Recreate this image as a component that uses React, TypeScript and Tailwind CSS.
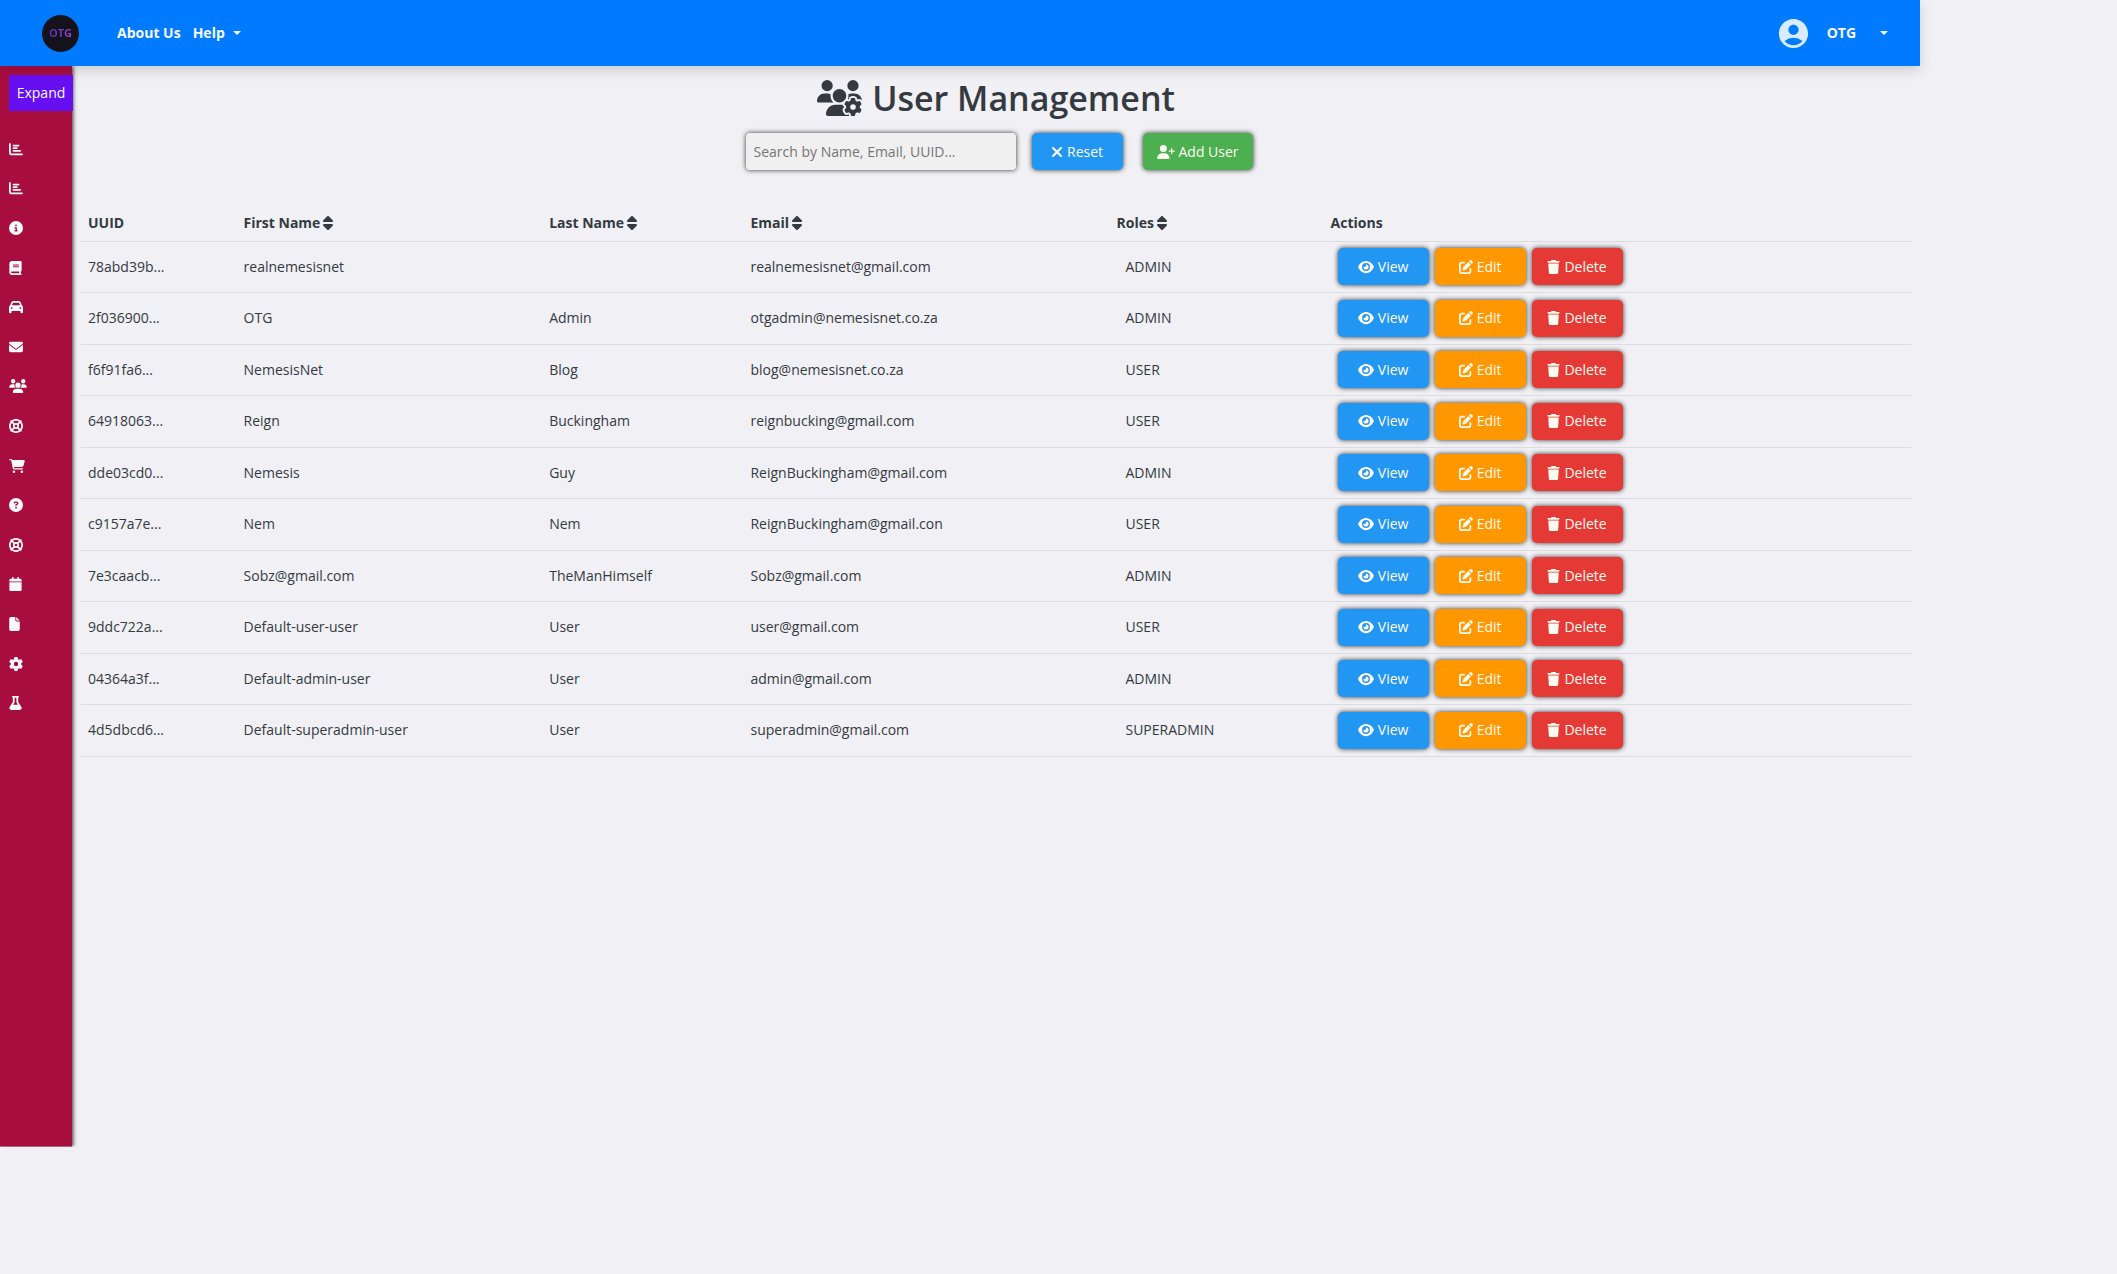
import {
  FaBook,
  FaCalendar,
  FaCar,
  FaCartShopping,
  FaChartBar,
  FaCircleInfo,
  FaCircleQuestion,
  FaEnvelope,
  FaEye,
  FaFile,
  FaFlask,
  FaGear,
  FaLifeRing,
  FaPenToSquare,
  FaSort,
  FaTrash,
  FaUserPlus,
  FaUsers,
  FaUsersGear,
  FaXmark,
} from 'react-icons/fa6';
import { MdAccountCircle } from 'react-icons/md';

const menu = [
  { name: 'Dashboard', icon: FaChartBar, width: 'w-[14px]' },
  { name: 'Reports', icon: FaChartBar, width: 'w-[14px]' },
  { name: 'Information', icon: FaCircleInfo, width: 'w-[14px]' },
  { name: 'Bookings', icon: FaBook, width: 'w-[13px]' },
  { name: 'Vehicles', icon: FaCar, width: 'w-[14px]' },
  { name: 'Messages', icon: FaEnvelope, width: 'w-[14px]' },
  { name: 'Users', icon: FaUsers, width: 'w-[18px]' },
  { name: 'Support', icon: FaLifeRing, width: 'w-[14px]' },
  { name: 'Shop', icon: FaCartShopping, width: 'w-4' },
  { name: 'FAQ', icon: FaCircleQuestion, width: 'w-[14px]' },
  { name: 'Help desk', icon: FaLifeRing, width: 'w-[14px]' },
  { name: 'Calendar', icon: FaCalendar, width: 'w-[13px]' },
  { name: 'Files', icon: FaFile, width: 'w-[11px]' },
  { name: 'Settings', icon: FaGear, width: 'w-[14px]' },
  { name: 'Testing', icon: FaFlask, width: 'w-[13px]' },
];

const columns = [
  { label: 'UUID', width: 'w-[8.5%]', sortable: false },
  { label: 'First Name', width: 'w-[16.7%]', sortable: true },
  { label: 'Last Name', width: 'w-[11%]', sortable: true },
  { label: 'Email', width: 'w-[20%]', sortable: true },
  { label: 'Roles', width: 'w-[11.7%]', sortable: true },
  { label: 'Actions', width: 'w-[32.1%]', sortable: false },
];

const users = [
  { uuid: '78abd39b...', first: 'realnemesisnet', last: '', email: 'realnemesisnet@gmail.com', role: 'ADMIN' },
  { uuid: '2f036900...', first: 'OTG', last: 'Admin', email: 'otgadmin@nemesisnet.co.za', role: 'ADMIN' },
  { uuid: 'f6f91fa6...', first: 'NemesisNet', last: 'Blog', email: 'blog@nemesisnet.co.za', role: 'USER' },
  { uuid: '64918063...', first: 'Reign', last: 'Buckingham', email: 'reignbucking@gmail.com', role: 'USER' },
  { uuid: 'dde03cd0...', first: 'Nemesis', last: 'Guy', email: 'ReignBuckingham@gmail.com', role: 'ADMIN' },
  { uuid: 'c9157a7e...', first: 'Nem', last: 'Nem', email: 'ReignBuckingham@gmail.con', role: 'USER' },
  { uuid: '7e3caacb...', first: 'Sobz@gmail.com', last: 'TheManHimself', email: 'Sobz@gmail.com', role: 'ADMIN' },
  { uuid: '9ddc722a...', first: 'Default-user-user', last: 'User', email: 'user@gmail.com', role: 'USER' },
  { uuid: '04364a3f...', first: 'Default-admin-user', last: 'User', email: 'admin@gmail.com', role: 'ADMIN' },
  { uuid: '4d5dbcd6...', first: 'Default-superadmin-user', last: 'User', email: 'superadmin@gmail.com', role: 'SUPERADMIN' },
];

const button = 'flex items-center justify-center gap-1 shrink-0 h-[37px] rounded-[5px] text-[#fffaf0] shadow-[0_0_5px_#333]';

const Caret = () => (
  <span className="w-0 h-0 border-x-4 border-x-transparent border-t-4 border-t-current" />
);

const Navbar = () => {
  return (
    <nav className="relative z-10 flex items-center h-[66px] pl-[42px] pr-8 bg-[#007bff] text-[#f8f9fa] font-bold shadow-[0_4px_12px_rgba(0,0,0,0.15)]">
      <a href="#" className="flex items-center justify-center size-[37px] rounded-full bg-[#14121a] text-[11px]">
        <span className="bg-linear-to-r from-[#5b2bb5] to-[#9146d8] bg-clip-text text-transparent">OTG</span>
      </a>
      <a href="#" className="ml-[38px]">About Us</a>
      <button className="flex items-center gap-2 ml-3">
        Help <Caret />
      </button>
      <button className="flex items-center ml-auto">
        <MdAccountCircle className="size-[35px] text-[#d9ebff]" />
        <span className="ml-4 mr-6">OTG</span>
        <Caret />
      </button>
    </nav>
  );
};

const Sidebar = () => {
  return (
    <aside className="w-[72px] shrink-0 bg-[#a80d40] text-[#f8f9fa] pt-[9px] shadow-[1px_0_4px_#333] [clip-path:inset(0_-8px_0_0)]">
      <button className="ml-[9px] w-16 h-9 bg-[#6610f2]">Expand</button>
      <ul className="flex flex-col h-[594px] mt-[18px]">
        {menu.map(({ name, icon: Icon, width }) => (
          <li key={name} className="flex flex-1 items-center pl-[9px]">
            <a href="#" aria-label={name}>
              <Icon className={`h-[14px] ${width}`} />
            </a>
          </li>
        ))}
      </ul>
    </aside>
  );
};

const UserTable = () => {
  return (
    <table className="w-full mt-[35px] table-fixed border-collapse text-left">
      <thead>
        <tr className="h-9 border-b border-[#dcdce0]">
          {columns.map((col) => (
            <th key={col.label} className={`${col.width} px-[7px] font-bold`}>
              {col.sortable ? (
                <button className="flex items-center gap-[3px]">
                  {col.label} <FaSort className="h-4 w-[10px]" />
                </button>
              ) : (
                col.label
              )}
            </th>
          ))}
        </tr>
      </thead>
      <tbody>
        {users.map((user) => (
          <tr key={user.uuid} className="h-[51px] even:h-[52px] border-b border-[#dcdce0]">
            <td className="px-[7px]">{user.uuid}</td>
            <td className="px-[7px]">{user.first}</td>
            <td className="px-[7px]">{user.last}</td>
            <td className="px-[7px]">{user.email}</td>
            <td className="px-4">{user.role}</td>
            <td className="px-[14px]">
              <div className="flex gap-[6px]">
                <button className={`${button} w-[91px] bg-[#2196f3]`}>
                  <FaEye className="h-[14px] w-4" /> View
                </button>
                <button className={`${button} w-[91px] bg-[#ff9800]`}>
                  <FaPenToSquare className="size-[14px]" /> Edit
                </button>
                <button className={`${button} w-[91px] bg-[#e53935]`}>
                  <FaTrash className="h-[14px] w-[13px]" /> Delete
                </button>
              </div>
            </td>
          </tr>
        ))}
      </tbody>
    </table>
  );
};

const App = () => {
  return (
    <div className="min-h-screen bg-[#f0f0f5] font-['Open_Sans',sans-serif] text-[14px] leading-5 text-[#343a40]">
      <div className="flex flex-col w-[90.7%] min-h-[90vh]">
        <Navbar />
        <div className="flex flex-1">
          <Sidebar />
          <main className="flex-1 px-[9px] pt-[10px]">
            <h1 className="flex items-center justify-center gap-[10px] h-11 text-[34px] font-semibold">
              <FaUsersGear className="h-9 w-[45px]" /> User Management
            </h1>
            <div className="flex items-center justify-center mt-[13px] ml-[6px]">
              <input
                type="text"
                aria-label="Search users"
                placeholder="Search by Name, Email, UUID..."
                className="w-[270px] h-[37px] px-2 rounded-[4px] bg-[#f0f0f0] placeholder:text-[#757575] shadow-[0_0_5px_#333]"
              />
              <button className={`${button} w-[91px] ml-4 bg-[#2196f3]`}>
                <FaXmark className="h-4 w-3" /> Reset
              </button>
              <button className={`${button} w-[110px] ml-5 bg-[#4caf50]`}>
                <FaUserPlus className="h-[14px] w-[18px]" /> Add User
              </button>
            </div>
            <UserTable />
          </main>
        </div>
      </div>
    </div>
  );
};

export default App;
